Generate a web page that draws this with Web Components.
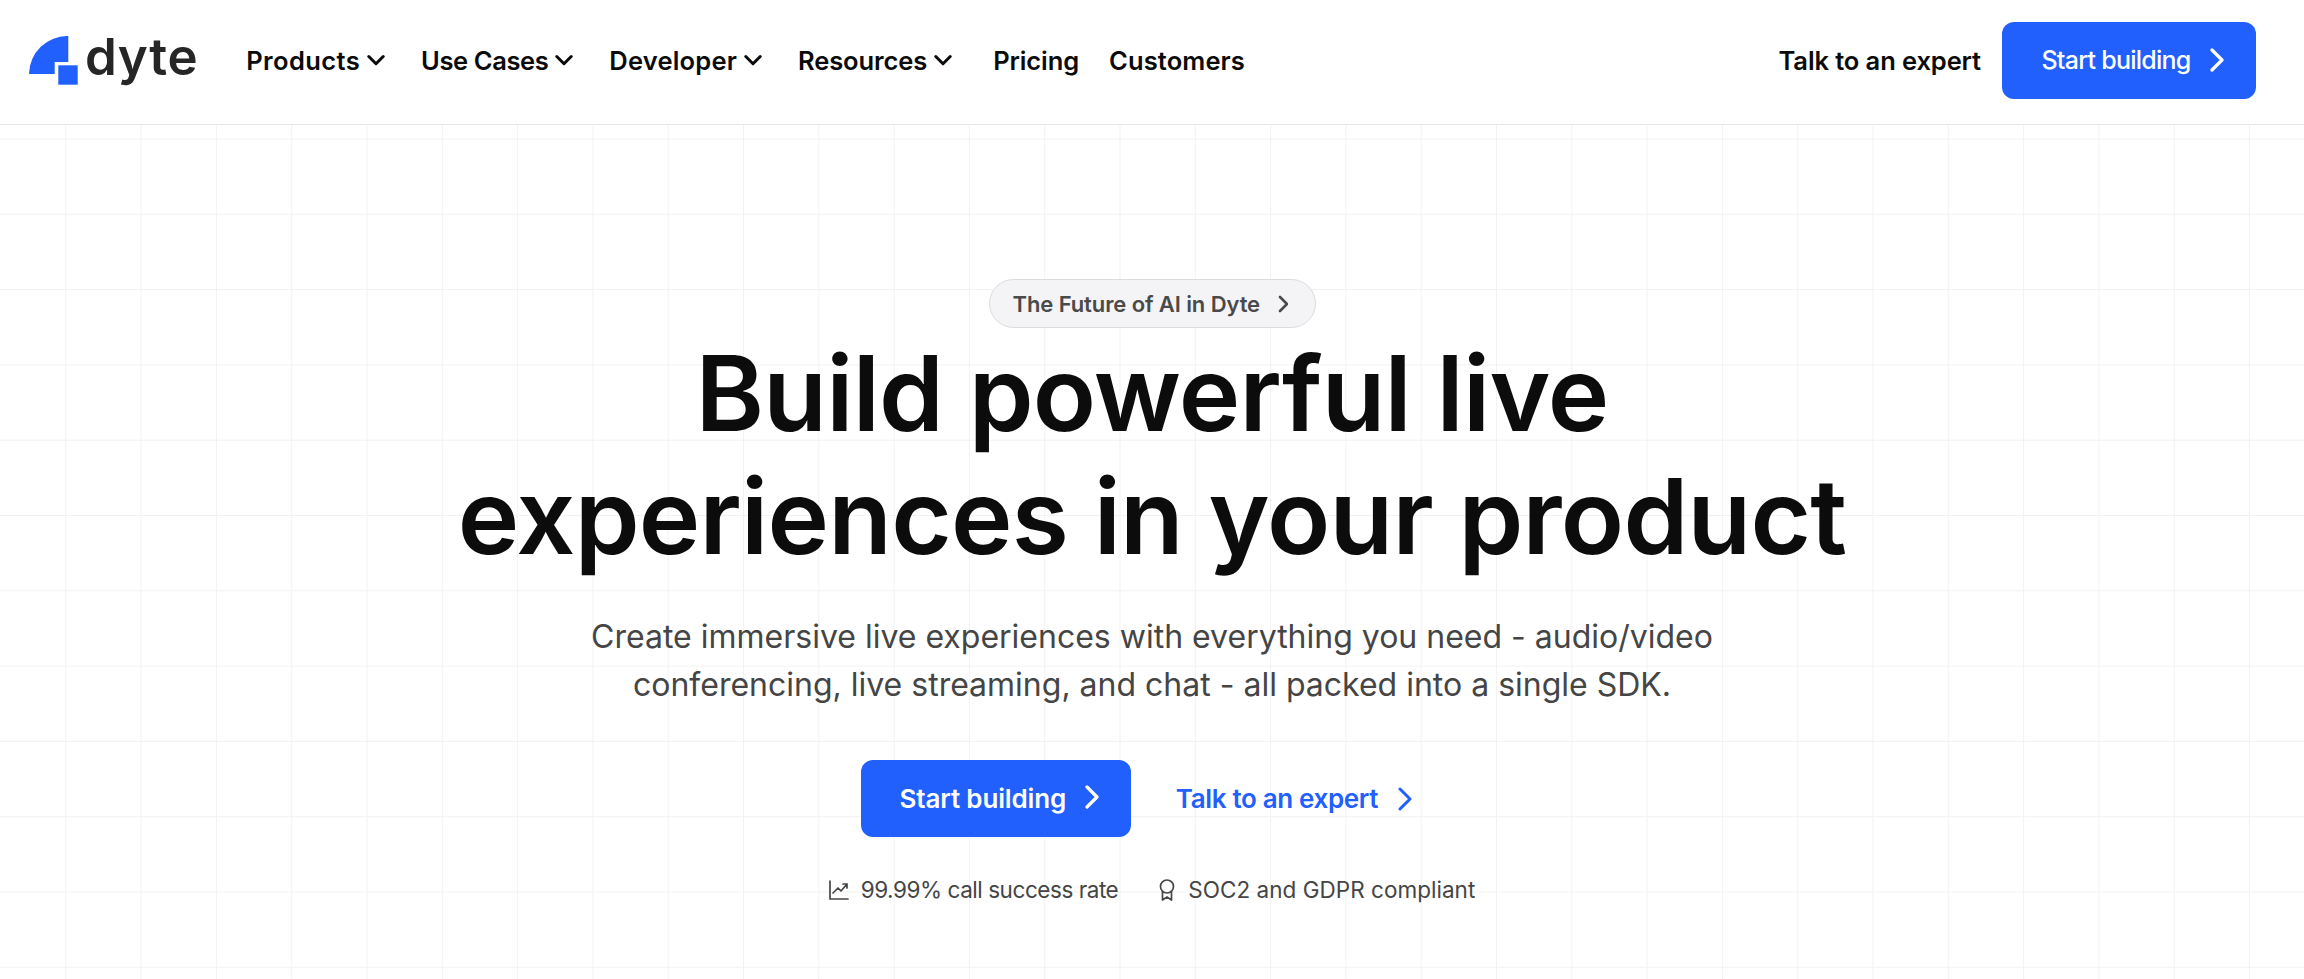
<!doctype html>
<html><head><meta charset="utf-8"><style>
html,body{margin:0;padding:0;background:#fff}
body{font-family:"Inter","Liberation Sans",sans-serif;height:979px;overflow:hidden}
</style></head><body>
<dyte-page></dyte-page>
<template id="btn"><style>
:host{display:inline-flex;align-items:center;justify-content:center;box-sizing:border-box;height:77px;padding-left:7px;background:#2160fd;color:#fff;border-radius:12px;font-size:var(--fs,25px);font-weight:var(--fw,500);letter-spacing:var(--ls,-.75px);white-space:nowrap;gap:19px}
svg{display:block;width:14px;height:24px;margin-top:var(--cm,0);fill:none;stroke:currentColor;stroke-width:3.2;stroke-linecap:round;stroke-linejoin:round}
</style><slot></slot><svg viewBox="0 0 14 24"><path d="M2 2l10 10-10 10"/></svg></template>
<template id="item"><style>
:host{display:inline-flex;align-items:center;gap:7px;font-size:25.5px;font-weight:560;color:#0b0b0b;white-space:nowrap}
svg{display:block;width:18px;height:13px;fill:none;stroke:currentColor;stroke-width:3;stroke-linecap:round;stroke-linejoin:round}
</style><slot></slot><svg viewBox="0 0 18 13"><path d="M1.800 2.500l7.200 7.200 7.200-7.200"/></svg></template>
<script>
const fromTpl=id=>class extends HTMLElement{constructor(){super();this.attachShadow({mode:'open'}).append(document.getElementById(id).content.cloneNode(true))}};
customElements.define('dyte-button',fromTpl('btn'));
customElements.define('nav-item',fromTpl('item'));
class DyteLogo extends HTMLElement{constructor(){super();this.attachShadow({mode:'open'}).innerHTML=`<style>
:host{display:flex;align-items:flex-start;gap:7px;color:#262626;font-size:51px;font-weight:600;letter-spacing:.6px;line-height:1}
svg{display:block;width:49px;height:49px}span{display:block;margin-top:-5px}</style>
<svg viewBox="29 35 49 49"><path fill="#2160fd" d="M29 73A38.500 38.500 0 0 1 68.300 35V61H54.700V73Z"/><rect fill="#2160fd" x="58.300" y="64.300" width="19.400" height="19.400"/></svg><span>dyte</span>`}}
customElements.define('dyte-logo',DyteLogo);
class TopNav extends HTMLElement{constructor(){super();this.attachShadow({mode:'open'}).innerHTML=`<style>
:host{display:flex;align-items:center;box-sizing:border-box;height:125px;padding:0 48px 4px 29px;border-bottom:1px solid #e8e8e8;background:#fff}
.links{display:flex;align-items:center;margin-left:48px;gap:36px}.right{margin-left:auto;display:flex;align-items:center;gap:21px}
.plain{font-size:25.5px;font-weight:560;color:#0b0b0b;white-space:nowrap;letter-spacing:-.1px}
dyte-button{width:254px}</style>
<dyte-logo></dyte-logo><div class="links"><nav-item style="letter-spacing:.4px">Products</nav-item><nav-item style="letter-spacing:-.4px">Use Cases</nav-item><nav-item style="letter-spacing:.2px">Developer</nav-item><nav-item style="letter-spacing:-.1px">Resources</nav-item><span class="plain" style="margin-left:5px">Pricing</span><span class="plain" style="margin-left:-6px;letter-spacing:.12px">Customers</span></div>
<div class="right"><span class="plain">Talk to an expert</span><dyte-button>Start building</dyte-button></div>`}}
customElements.define('top-nav',TopNav);
class Hero extends HTMLElement{constructor(){super();this.attachShadow({mode:'open'}).innerHTML=`<style>
:host{--l:#f2f2f3;display:flex;flex-direction:column;align-items:center;height:854px;box-sizing:border-box;padding-top:154px;
background-image:repeating-linear-gradient(180deg,transparent 0 13px,var(--l) 14px,transparent 15px 75.3px),repeating-linear-gradient(90deg,transparent 0 64.8px,var(--l) 65.8px,transparent 66.8px 75.3px)}
.pill{display:flex;align-items:center;gap:18px;box-sizing:border-box;height:49px;width:327px;padding-left:23px;border:1.5px solid #dcdcde;border-radius:25px;background:#f4f4f6;color:#4a4a4a;font-size:22px;font-weight:600;letter-spacing:-.1px;white-space:nowrap}
.pill svg{width:10px;height:18px;fill:none;stroke:currentColor;stroke-width:2.6;stroke-linecap:round;stroke-linejoin:round}
h1{margin:4px 0 0;font-size:104px;line-height:123px;font-weight:640;letter-spacing:-.75px;color:#0c0c0c;text-align:center;white-space:nowrap}
p{margin:35px 0 0;font-size:32px;line-height:48px;letter-spacing:0;color:#454545;text-align:center;white-space:nowrap}
.cta{display:flex;align-items:center;gap:45px;margin-top:51px;padding-right:31px}
dyte-button{width:270px;--fs:26px;--fw:600;--ls:-.15px;--cm:-4px}
.link{display:flex;align-items:center;gap:20px;color:#2160fd;font-size:26px;font-weight:600;letter-spacing:-.35px;white-space:nowrap}
.link svg{width:14px;height:24px;fill:none;stroke:currentColor;stroke-width:3;stroke-linecap:round;stroke-linejoin:round}
.facts{display:flex;align-items:center;gap:41px;margin-top:39px;color:#454545;font-size:22.5px;white-space:nowrap}
.facts div{display:flex;align-items:center;gap:13px}.facts svg{display:block;fill:none;stroke:#454545;stroke-width:1.7;stroke-linecap:round;stroke-linejoin:round}
</style>
<div class="pill">The Future of AI in Dyte<svg viewBox="0 0 10 18"><path d="M2 2l7 7-7 7"/></svg></div>
<h1>Build powerful live<br>experiences in your product</h1>
<p>Create immersive live experiences with everything you need - audio/video<br>conferencing, live streaming, and chat - all packed into a single SDK.</p>
<div class="cta"><dyte-button>Start building</dyte-button><a class="link">Talk to an expert<svg viewBox="0 0 14 24"><path d="M2 2l10 10-10 10"/></svg></a></div>
<div class="facts"><div style="letter-spacing:-.45px;gap:12px"><svg width="20" height="20" viewBox="0 0 20 20"><path d="M1 1v18h18M4 13l5-5 3 3 6-7M14 4h4v4"/></svg>99.99% call success rate</div><div style="letter-spacing:.03px"><svg width="16" height="22" viewBox="0 0 16 22"><circle cx="8" cy="7.5" r="6.5"/><path d="M3.5 12.5V21L8 18l4.500 3v-8.500"/></svg>SOC2 and GDPR compliant</div></div>`}}
customElements.define('hero-section',Hero);
class Page extends HTMLElement{constructor(){super();this.attachShadow({mode:'open'}).innerHTML=`<style>:host{display:block;width:100%;height:979px}</style><top-nav></top-nav><hero-section></hero-section>`}}
customElements.define('dyte-page',Page);
</script>
</body></html>
